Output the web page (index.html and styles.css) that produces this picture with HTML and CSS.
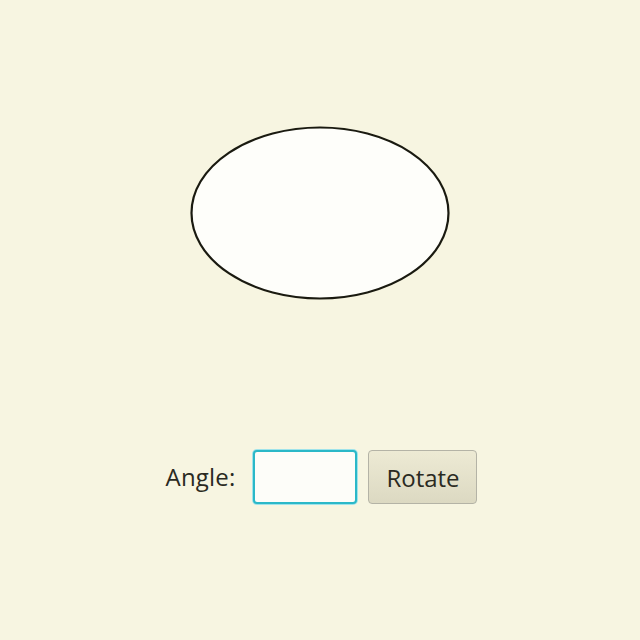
FILE: index.html
```html
<!DOCTYPE html>
<html>
<head>
<meta charset="utf-8">
<link rel="stylesheet" href="styles.css">
</head>
<body>
<div class="app">
  <div class="stage">
    <svg class="shape" width="262" height="176" viewBox="0 0 262 176">
      <ellipse cx="131" cy="88" rx="128.5" ry="85.5" fill="#fefefa" stroke="#1a1a10" stroke-width="2.2"/>
    </svg>
  </div>
  <div class="controls">
    <span class="label">Angle:</span>
    <input class="field" type="text">
    <button class="btn">Rotate</button>
  </div>
</div>
</body>
</html>
```
FILE: styles.css
```css
html, body {
  margin: 0;
  padding: 0;
  background: #f7f5e1;
}
.app {
  width: 640px;
  height: 640px;
  display: flex;
  flex-direction: column;
  align-items: center;
  font-family: "Open Sans", "Noto Sans", sans-serif;
}
.stage {
  padding-top: 125px;
  height: 176px;
}
.shape {
  display: block;
}
.controls {
  margin-top: 149px;
  display: flex;
  align-items: center;
  margin-left: 3px;
}
.label {
  font-size: 24px;
  color: #2a2a22;
  margin-right: 18px;
  line-height: 54px;
  letter-spacing: 0.2px;
}
.field {
  box-sizing: border-box;
  width: 104px;
  height: 54px;
  border: 2px solid #2bb8c8;
  border-radius: 4px;
  box-shadow: 0 0 0 1px #9fe3ea;
  background: #fdfdf9;
  outline: none;
  margin: 0 11px 0 0;
  padding: 0;
}
.btn {
  box-sizing: border-box;
  width: 109px;
  height: 54px;
  border: 1px solid #b4b3a6;
  border-radius: 4px;
  background: linear-gradient(#edead4, #dcd9c2);
  font-family: "Open Sans", "Noto Sans", sans-serif;
  font-size: 24px;
  color: #2a2a22;
  padding: 0;
  margin: 0;
}
```
